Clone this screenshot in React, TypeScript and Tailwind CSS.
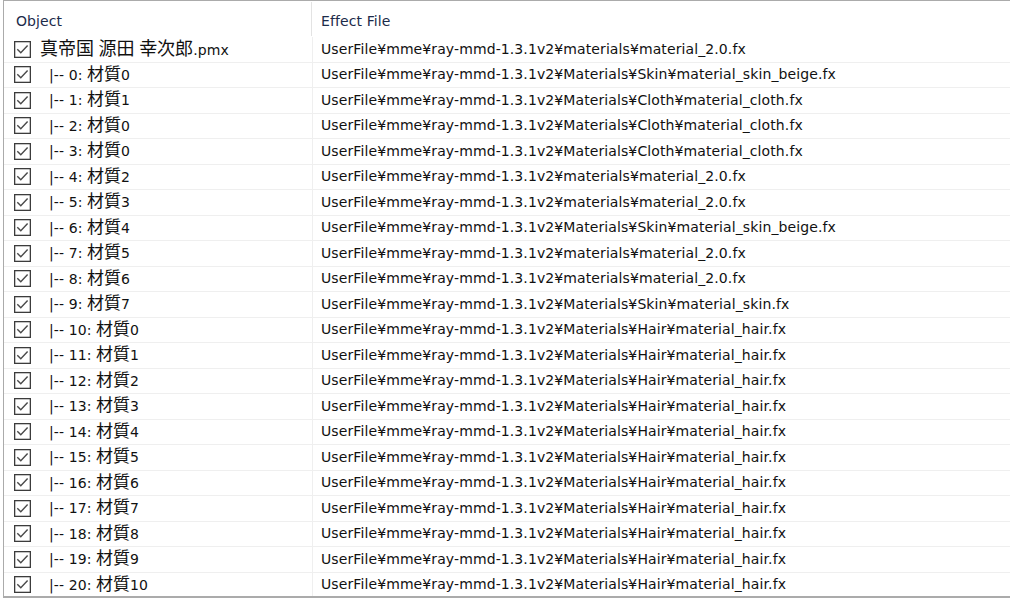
import React from "react";

type Row = { label: React.ReactNode; file: string; child: boolean };

const Cjk = ({ children }: { children: React.ReactNode }) => (
  <span className="font-['Noto_Sans_CJK_JP',sans-serif] text-[17px] leading-none tracking-normal">{children}</span>
);

const CjkRoot = ({ children }: { children: React.ReactNode }) => (
  <span className="font-['Noto_Sans_CJK_JP',sans-serif] text-[18px] leading-none tracking-normal">{children}</span>
);

const base = "UserFile¥mme¥ray-mmd-1.3.1v2¥";
const mat = base + "materials¥material_2.0.fx";
const skinBeige = base + "Materials¥Skin¥material_skin_beige.fx";
const cloth = base + "Materials¥Cloth¥material_cloth.fx";
const skin = base + "Materials¥Skin¥material_skin.fx";
const hair = base + "Materials¥Hair¥material_hair.fx";

const child = (n: number, m: number, file: string): Row => ({
  child: true,
  file,
  label: (
    <>
      {`|-- ${n}: `}
      <Cjk>材質</Cjk>
      {m}
    </>
  ),
});

const rows: Row[] = [
  {
    child: false,
    file: mat,
    label: (
      <>
        <CjkRoot>真帝国</CjkRoot> <CjkRoot>源田</CjkRoot> <CjkRoot>幸次郎</CjkRoot>.pmx
      </>
    ),
  },
  child(0, 0, skinBeige),
  child(1, 1, cloth),
  child(2, 0, cloth),
  child(3, 0, cloth),
  child(4, 2, mat),
  child(5, 3, mat),
  child(6, 4, skinBeige),
  child(7, 5, mat),
  child(8, 6, mat),
  child(9, 7, skin),
  child(10, 0, hair),
  child(11, 1, hair),
  child(12, 2, hair),
  child(13, 3, hair),
  child(14, 4, hair),
  child(15, 5, hair),
  child(16, 6, hair),
  child(17, 7, hair),
  child(18, 8, hair),
  child(19, 9, hair),
  child(20, 10, hair),
];

const CheckBox = () => (
  <svg width="17" height="17" viewBox="0 0 17 17" className="shrink-0">
    <rect x="0.65" y="0.65" width="15.7" height="15.7" fill="#fff" stroke="#3c3c3c" strokeWidth="1.3" />
    <path d="M3.3 8.3 L6.8 11.8 L13.6 4.6" fill="none" stroke="#4a4a4a" strokeWidth="1.4" />
  </svg>
);

export default function App() {
  return (
    <div className="w-[1010px] h-[606px] bg-white overflow-hidden font-['DejaVu_Sans','Noto_Sans_CJK_JP',sans-serif] text-[14px] tracking-[0.1px]">
      <div className="ml-[3px] border-t border-l border-b-2 border-[#ababab] h-[598px] overflow-hidden">
        <div className="flex h-[36px] items-stretch text-[#1c2b4a]">
          <div className="w-[308px] flex items-center pl-[12px] pt-[4px] relative">
            Object
            <div className="absolute right-0 top-[1px] bottom-[1px] w-px bg-[#e3e3e3]" />
          </div>
          <div className="flex-1 flex items-center pl-[9px] pt-[4px]">Effect File</div>
        </div>
        {rows.map((r, i) => (
          <div key={i} className="flex h-[25.5px] border-b border-[#efefef] text-[#111]">
            <div className="w-[309px] flex items-center pl-[10px] border-r border-[#efefef] whitespace-nowrap">
              <CheckBox />
              <span className={r.child ? "ml-[18px]" : "ml-[9px]"}>{r.label}</span>
            </div>
            <div className="flex-1 flex items-center pl-[8px] whitespace-nowrap">{r.file}</div>
          </div>
        ))}
      </div>
    </div>
  );
}
